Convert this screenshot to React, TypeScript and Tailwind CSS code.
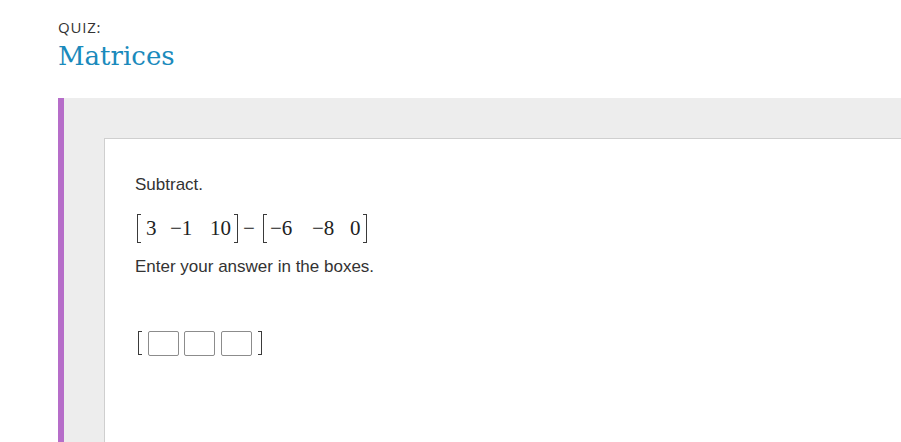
import React from "react";

function Bracket({ side, h }: { side: "l" | "r"; h: string }) {
  return side === "l" ? (
    <span className={`inline-block w-[4px] border-l-[1.5px] border-y border-[#3a3a3a] ${h}`} />
  ) : (
    <span className={`inline-block w-[4px] border-r-[1.5px] border-y border-[#3a3a3a] ${h}`} />
  );
}

function Box({ className = "" }: { className?: string }) {
  return <span className={`inline-block w-[31px] h-[25px] border border-[#8c8c8c] rounded-[2px] bg-white ${className}`} />;
}

export default function App() {
  const serif = { fontFamily: '"Liberation Serif", "Times New Roman", serif' };
  return (
    <div className="w-[901px] h-[442px] overflow-hidden bg-white" style={{ fontFamily: '"Liberation Sans", Arial, sans-serif' }}>
      <div className="pl-[58px] pt-[17px]">
        <div className="text-[15px] leading-[20px] text-[#333] tracking-[0.8px]" style={{ fontFamily: '"Open Sans", sans-serif' }}>
          QUIZ:
        </div>
        <div className="mt-[4px] text-[26px] leading-[30px] text-[#1a8abc]" style={{ fontFamily: '"DejaVu Serif", serif' }}>
          Matrices
        </div>
      </div>
      <div className="ml-[58px] mt-[27px] w-[900px] h-[360px] border-l-[6px] border-[#b66dc9] bg-[#ededed] pl-[40px] pt-[40px]">
        <div className="h-full bg-white border border-[#cfcfcf] pl-[30px] pt-[36px] text-[#333]">
          <div className="text-[17px] leading-[20px]">Subtract.</div>
          <div className="mt-[19px] flex items-center h-[29px] text-[21px] leading-[21px] text-[#222] whitespace-nowrap" style={serif}>
            <span className="ml-[2px] w-[9px] flex"><Bracket side="l" h="h-[29px]" /></span>
            <span className="w-[24px]">3</span>
            <span className="w-[40px]">−1</span>
            <span className="w-[24px]">10</span>
            <span className="w-[9px] flex"><Bracket side="r" h="h-[29px]" /></span>
            <span className="w-[20px]">−</span>
            <span className="w-[7px] flex"><Bracket side="l" h="h-[29px]" /></span>
            <span className="w-[42px]">−6</span>
            <span className="w-[38px]">−8</span>
            <span className="w-[13px]">0</span>
            <span className="flex"><Bracket side="r" h="h-[29px]" /></span>
          </div>
          <div className="mt-[14px] text-[17px] leading-[20px]">Enter your answer in the boxes.</div>
          <div className="mt-[53px] flex items-center h-[26px]">
            <span className="ml-[3px] flex"><Bracket side="l" h="h-[24px]" /></span>
            <Box className="ml-[6px]" />
            <Box className="ml-[5px]" />
            <Box className="ml-[6px]" />
            <span className="ml-[6px] flex"><Bracket side="r" h="h-[24px]" /></span>
          </div>
        </div>
      </div>
    </div>
  );
}
